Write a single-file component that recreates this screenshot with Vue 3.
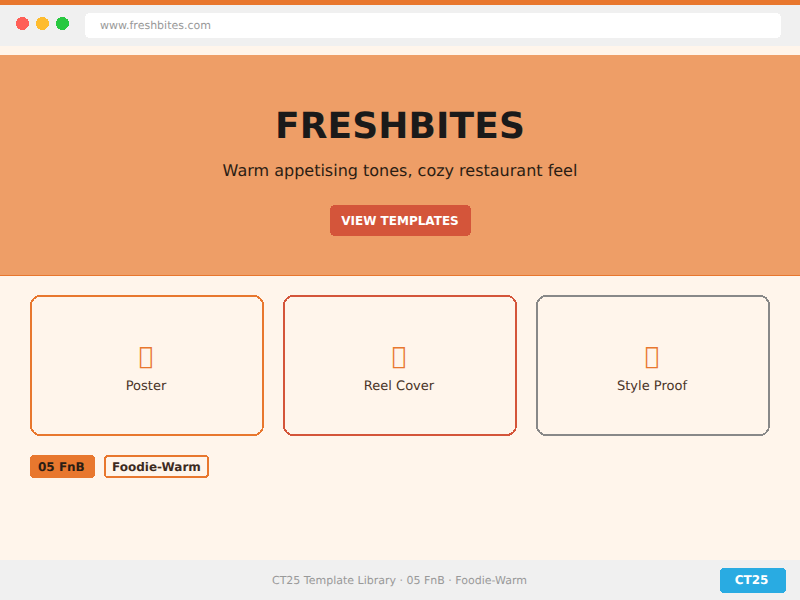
<script setup>
const cards = [
  { label: 'Poster', icon: '\uE123', color: '#e8772e' },
  { label: 'Reel Cover', icon: '\uE123', color: '#d4553a' },
  { label: 'Style Proof', icon: '\uE123', color: '#888888' },
]
const dots = ['#ff5f57', '#febc2e', '#28c840']
</script>

<template>
  <div class="page">
    <header class="chrome">
      <div class="dots">
        <svg v-for="d in dots" :key="d" class="dot" width="13" height="13" viewBox="0 0 13 13" shape-rendering="crispEdges">
          <circle cx="6.5" cy="6.5" r="6.5" :fill="d" />
        </svg>
      </div>
      <div class="url">
        <svg class="frame" width="696" height="25" shape-rendering="crispEdges"><rect width="696" height="25" rx="5" fill="#fff" /></svg>
        www.freshbites.com
      </div>
    </header>
    <section class="hero">
      <h1>FRESHBITES</h1>
      <p>Warm appetising tones, cozy restaurant feel</p>
      <button class="cta">
        <svg class="frame" width="141" height="31" shape-rendering="crispEdges"><rect width="141" height="31" rx="5" fill="#d4553a" /></svg>
        VIEW TEMPLATES
      </button>
    </section>
    <main class="content">
      <div class="cards">
        <div v-for="c in cards" :key="c.label" class="card">
          <svg class="frame" width="234" height="141" shape-rendering="crispEdges">
            <rect width="234" height="141" rx="10" :fill="c.color" />
            <rect x="2" y="2" width="230" height="137" rx="8" fill="#fff5eb" />
          </svg>
          <div class="icon">{{ c.icon }}</div>
          <div class="label">{{ c.label }}</div>
        </div>
      </div>
      <div class="tags">
        <span class="tag solid">
          <svg class="frame" width="65" height="23" shape-rendering="crispEdges"><rect width="65" height="23" rx="4" fill="#e8772e" /></svg>
          05 FnB
        </span>
        <span class="tag outline">
          <svg class="frame" width="105" height="23" shape-rendering="crispEdges">
            <rect width="105" height="23" rx="4" fill="#e8772e" />
            <rect x="2" y="2" width="101" height="19" rx="2" fill="#fff5eb" />
          </svg>
          Foodie-Warm
        </span>
      </div>
    </main>
    <footer class="footer">
      <span class="foot-text">CT25 Template Library · 05 FnB · Foodie-Warm</span>
      <span class="badge">
        <svg class="frame" width="66" height="25" shape-rendering="crispEdges"><rect width="66" height="25" rx="4" fill="#29abe2" /></svg>
        CT25
      </span>
    </footer>
  </div>
</template>

<style>
html, body { margin: 0; padding: 0; }
</style>

<style scoped>
.page {
  width: 800px;
  height: 600px;
  display: flex;
  flex-direction: column;
  background: #fff5eb;
  font-family: "DejaVu Sans", sans-serif;
  text-rendering: geometricPrecision;
  overflow: hidden;
}
.frame {
  position: absolute;
  left: 0;
  top: 0;
  z-index: -1;
  display: block;
}
.chrome {
  flex: none;
  box-sizing: border-box;
  border-top: 5px solid #e8772e;
  height: 46px;
  background: #f0f0f0;
  display: flex;
  align-items: center;
  padding: 0 19px 0 16px;
  gap: 16px;
}
.dots { display: flex; gap: 7px; margin-top: -4px; }
.dot { display: block; }
.url {
  position: relative;
  isolation: isolate;
  flex: 1;
  height: 25px;
  padding-left: 15px;
  font-size: 11px;
  line-height: 25px;
  color: #999;
}
.hero {
  margin-top: 9px;
  height: 221px;
  flex: none;
  box-sizing: border-box;
  background: #ee9e67;
  border-bottom: 1px solid #e8772e;
  display: flex;
  flex-direction: column;
  align-items: center;
  padding-top: 49px;
}
h1 {
  margin: 0;
  font-size: 36px;
  line-height: 46px;
  font-weight: 700;
  letter-spacing: 0.1px;
  color: #1a1a1a;
}
.hero p {
  margin: 11px 0 0;
  font-size: 16px;
  line-height: 19px;
  color: #2b1d14;
}
.cta {
  position: relative;
  isolation: isolate;
  margin-top: 25px;
  width: 141px;
  height: 31px;
  border: none;
  background: none;
  color: #fff;
  font-family: inherit;
  font-size: 12px;
  font-weight: 700;
  letter-spacing: 0;
  padding: 0;
}
.content {
  flex: 1;
  padding: 19px 30px 0;
}
.cards {
  display: grid;
  grid-template-columns: repeat(3, 234px);
  gap: 19px;
}
.card {
  position: relative;
  isolation: isolate;
  height: 141px;
  box-sizing: border-box;
  padding: 7px 2px 2px 0;
  display: flex;
  flex-direction: column;
  align-items: center;
  justify-content: center;
  gap: 9px;
}
.icon {
  font-size: 24px;
  line-height: 28px;
  color: #e8772e;
}
.label {
  font-size: 13px;
  line-height: 16px;
  color: #4a3428;
}
.tags {
  display: flex;
  gap: 9px;
  margin-top: 19px;
}
.tag {
  position: relative;
  isolation: isolate;
  box-sizing: border-box;
  height: 23px;
  font-size: 12px;
  font-weight: 700;
  line-height: 24px;
  padding-left: 8px;
  color: #3d2b1f;
}
.tag.solid { width: 65px; color: #2b1d14; }
.tag.outline { width: 105px; }
.footer {
  height: 40px;
  flex: none;
  background: #f0f0f0;
  display: flex;
  align-items: center;
  justify-content: center;
  position: relative;
  font-size: 11px;
  color: #999;
}
.foot-text { margin-right: 1px; }
.badge {
  position: absolute;
  isolation: isolate;
  right: 14px;
  top: 8px;
  box-sizing: border-box;
  width: 66px;
  height: 25px;
  padding-right: 3px;
  color: #fff;
  font-size: 12px;
  font-weight: 700;
  line-height: 25px;
  text-align: center;
}
</style>
